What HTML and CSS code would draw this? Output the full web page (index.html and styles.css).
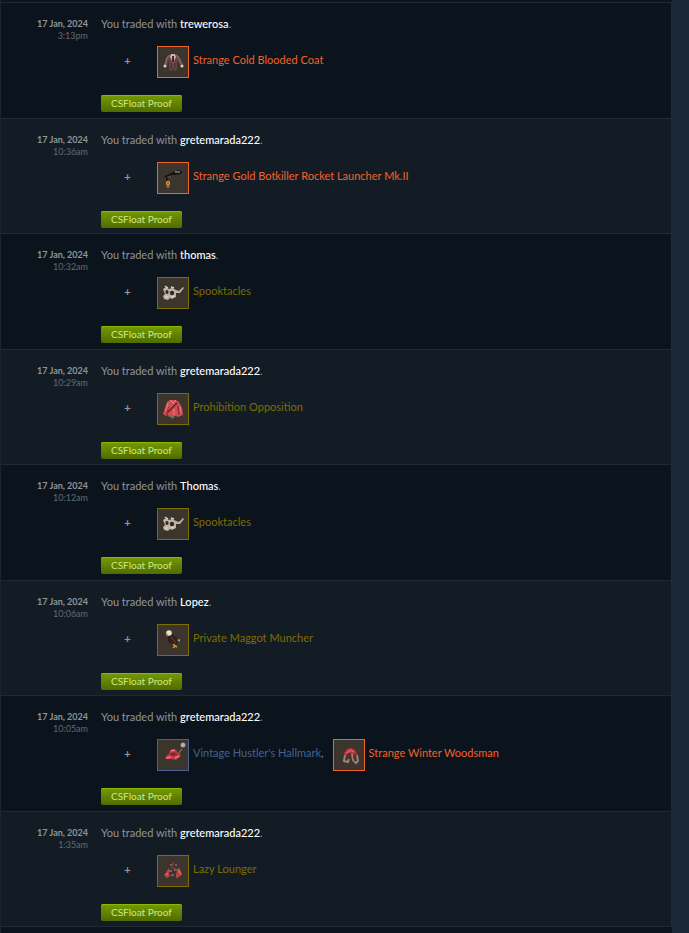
FILE: index.html
```
<!DOCTYPE html>
<html lang="en">
<head>
  <meta charset="UTF-8">
  <title>Trade History</title>
  <link rel="stylesheet" href="styles.css">
</head>
<body>
  <!-- item pictures -->
  <svg class="sprites" width="0" height="0" aria-hidden="true">
    <symbol id="coat" viewBox="0 0 30 30">
      <path d="M12 8 8 11 6 19 8 20 11 13 11 23 14 24 15 21 17 24 19 22 19 13 23 20 25 18 21 10 17 8z" fill="#654644"/>
      <path d="M12 8 9 11 7 18M18 8 21 11 24 18" fill="none" stroke="#7d6a65" stroke-width="1.5"/>
      <path d="M13 7h4l1 3-3 6-3-6z" fill="#c4b6a8"/>
      <path d="M15 9v6" stroke="#5c1f26" stroke-width="2"/>
      <path d="M13 16v6M17 16v5" stroke="#422d30" stroke-width="1"/>
      <circle cx="7" cy="19" r="1.5" fill="#dbcfbd"/>
      <circle cx="24" cy="19" r="1.5" fill="#dbcfbd"/>
    </symbol>
    <symbol id="launcher" viewBox="0 0 30 30">
      <path d="M7 14 16 10" stroke="#171310" stroke-width="2"/>
      <path d="M14 10 21 7 24 9 23 11 15 12z" fill="#11100f"/>
      <path d="M17 9 22 9" stroke="#8b7e73" stroke-width="1.5"/>
      <path d="M9 14 12 13 12 16" stroke="#5b4430" fill="none"/>
      <path d="M9 14v5" stroke="#211710" stroke-width="1.5"/>
      <circle cx="10" cy="20" r="2.2" fill="#d39a3a"/>
      <path d="M8 22h4l-1 3H9z" fill="#b4602a"/>
      <path d="M9 20h2" stroke="#5d3513"/>
    </symbol>
    <symbol id="glasses" viewBox="0 0 30 30">
      <path d="M5 11 8 9 11 11 14 10 18 12 21 13 25 9 26 10 22 15 18 15 18 19 14 21 12 20 10 22 6 21 5 18 7 16z" fill="#c1b3a1"/>
      <path d="M7 8 10 10M13 9l3 1" stroke="#e1d2bd" stroke-width="1.5"/>
      <ellipse cx="9" cy="14" rx="1.6" ry="2" fill="#342c29"/>
      <ellipse cx="14" cy="15" rx="2.2" ry="2.3" fill="#302927"/>
      <path d="M7 19h3M13 19l3-1" stroke="#efe0cb"/>
    </symbol>
    <symbol id="jacket" viewBox="0 0 30 30">
      <path d="M12 6 9 8 7 14 5 20 8 22 10 21 11 23 18 22 20 23 25 21 24 14 21 8 18 6z" fill="#cf4c52"/>
      <path d="M10 13 9 21M20 12 21 21" stroke="#922f39" stroke-width="1.5"/>
      <path d="M10 9 8 17M16 15v6M22 12l1 7" stroke="#ea6b70" stroke-width="1.5"/>
      <path d="M19 9 10 18" stroke="#56242a" stroke-width="1.5"/>
      <path d="m12 6 3 3 3-3" fill="none" stroke="#ef8585"/>
      <path d="M12 22 15 21 17 23 14 25z" fill="#6f6c68"/>
    </symbol>
    <symbol id="eagle" viewBox="0 0 30 30">
      <path d="M10 11 14 9 18 12 20 16 19 19 15 20 10 17z" fill="#30201d"/>
      <path d="M13 12 18 18" stroke="#5a3429" stroke-width="1.5"/>
      <circle cx="11" cy="8" r="2.8" fill="#eadfd0"/>
      <path d="M8 8 10 9 9 12z" fill="#d39b31"/>
      <path d="M19 15 22 14 22 17z" fill="#a9a097"/>
      <path d="M15 19 17 21 15 23M17 21 19 22" stroke="#d49c25" stroke-width="1.5" fill="none"/>
    </symbol>
    <symbol id="hat" viewBox="0 0 30 30">
      <path d="M7 19 9 15 11 14 12 10 16 9 19 11 20 14 23 14 22 17 18 20 13 19z" fill="#c03a42"/>
      <path d="M11 14 16 12 20 15 14 16z" fill="#83262e"/>
      <path d="M8 18 13 17M17 18 21 16M13 11 17 10" stroke="#ec777b" stroke-width="1.5"/>
      <path d="M20 14 24 9" stroke="#9d8574" stroke-width="1"/>
      <circle cx="25" cy="5" r="2.5" fill="#a39b93"/>
      <path d="M25 3v4M23 5h4" stroke="#c0b8b0"/>
    </symbol>
    <symbol id="woodsman" viewBox="0 0 30 30">
      <path d="M10 13 13 9 18 8 22 11 23 15 18 14 14 13 11 17z" fill="#b92f3e"/>
      <path d="M12 14 16 10 20 12" fill="none" stroke="#dc5b68" stroke-width="1.5"/>
      <path d="M11 15 10 21 14 22 15 19M18 14 19 20 22 23 24 21 23 15" fill="none" stroke="#998478" stroke-width="2"/>
      <path d="M14 15v4M20 15l1 6" stroke="#702833" stroke-width="2"/>
    </symbol>
    <symbol id="lounger" viewBox="0 0 30 30">
      <path d="M12 10 9 15 6 19 9 22 12 20 19 22 24 19 22 13 18 10z" fill="#b94345"/>
      <path d="M11 7 14 5 18 7 20 13 18 18 18 23 16 24 13 23 11 18z" fill="#3c3231"/>
      <path d="M12 9h2M17 9h2M11 15h3M16 14h3M13 19h3" stroke="#81786d" stroke-width="1.5"/>
      <path d="M15 6v4M13 12h4" stroke="#a32f38" stroke-width="1.5"/>
      <path d="M20 14 23 18M10 17l-2 2" stroke="#dc6663" stroke-width="1.5"/>
    </symbol>
  </svg>

  <main class="history">
    <article class="trade">
      <div class="date">17 Jan, 2024<span class="time">3:13pm</span></div>
      <div class="content">
        <div class="event">You traded with <a href="#">trewerosa</a>.</div>
        <div class="items">
          <span class="plus">+</span>
          <a class="item strange" href="#"><svg class="icon"><use href="#coat"/></svg><span class="name">Strange Cold Blooded Coat</span></a>
        </div>
        <button class="proof" type="button">CSFloat Proof</button>
      </div>
    </article>

    <article class="trade">
      <div class="date">17 Jan, 2024<span class="time">10:36am</span></div>
      <div class="content">
        <div class="event">You traded with <a href="#">gretemarada222</a>.</div>
        <div class="items">
          <span class="plus">+</span>
          <a class="item strange" href="#"><svg class="icon"><use href="#launcher"/></svg><span class="name">Strange Gold Botkiller Rocket Launcher Mk.II</span></a>
        </div>
        <button class="proof" type="button">CSFloat Proof</button>
      </div>
    </article>

    <article class="trade">
      <div class="date">17 Jan, 2024<span class="time">10:32am</span></div>
      <div class="content">
        <div class="event">You traded with <a href="#">thomas</a>.</div>
        <div class="items">
          <span class="plus">+</span>
          <a class="item unique" href="#"><svg class="icon"><use href="#glasses"/></svg><span class="name">Spooktacles</span></a>
        </div>
        <button class="proof" type="button">CSFloat Proof</button>
      </div>
    </article>

    <article class="trade">
      <div class="date">17 Jan, 2024<span class="time">10:29am</span></div>
      <div class="content">
        <div class="event">You traded with <a href="#">gretemarada222</a>.</div>
        <div class="items">
          <span class="plus">+</span>
          <a class="item unique" href="#"><svg class="icon"><use href="#jacket"/></svg><span class="name">Prohibition Opposition</span></a>
        </div>
        <button class="proof" type="button">CSFloat Proof</button>
      </div>
    </article>

    <article class="trade">
      <div class="date">17 Jan, 2024<span class="time">10:12am</span></div>
      <div class="content">
        <div class="event">You traded with <a href="#">Thomas</a>.</div>
        <div class="items">
          <span class="plus">+</span>
          <a class="item unique" href="#"><svg class="icon"><use href="#glasses"/></svg><span class="name">Spooktacles</span></a>
        </div>
        <button class="proof" type="button">CSFloat Proof</button>
      </div>
    </article>

    <article class="trade">
      <div class="date">17 Jan, 2024<span class="time">10:06am</span></div>
      <div class="content">
        <div class="event">You traded with <a href="#">Lopez</a>.</div>
        <div class="items">
          <span class="plus">+</span>
          <a class="item unique" href="#"><svg class="icon"><use href="#eagle"/></svg><span class="name">Private Maggot Muncher</span></a>
        </div>
        <button class="proof" type="button">CSFloat Proof</button>
      </div>
    </article>

    <article class="trade">
      <div class="date">17 Jan, 2024<span class="time">10:05am</span></div>
      <div class="content">
        <div class="event">You traded with <a href="#">gretemarada222</a>.</div>
        <div class="items">
          <span class="plus">+</span>
          <a class="item vintage" href="#"><svg class="icon"><use href="#hat"/></svg><span class="name">Vintage Hustler's Hallmark</span></a><span class="comma">,</span>
          <a class="item strange" href="#"><svg class="icon"><use href="#woodsman"/></svg><span class="name">Strange Winter Woodsman</span></a>
        </div>
        <button class="proof" type="button">CSFloat Proof</button>
      </div>
    </article>

    <article class="trade">
      <div class="date">17 Jan, 2024<span class="time">1:35am</span></div>
      <div class="content">
        <div class="event">You traded with <a href="#">gretemarada222</a>.</div>
        <div class="items">
          <span class="plus">+</span>
          <a class="item unique" href="#"><svg class="icon"><use href="#lounger"/></svg><span class="name">Lazy Lounger</span></a>
        </div>
        <button class="proof" type="button">CSFloat Proof</button>
      </div>
    </article>
  </main>
</body>
</html>
```
FILE: styles.css
```
* {
  box-sizing: border-box;
}
body {
  font-family: Lato, "Liberation Sans", sans-serif;
  font-size: 11px;
  line-height: 16px;
  color: #909498;
  background: #1b2838;
  margin: 0;
  padding: 0 17px 0 0;
}
a {
  color: inherit;
  text-decoration: none;
}
.sprites {
  display: block;
}
.history {
  min-height: 100vh;
  padding-top: 2px;
  background: #0b131c;
  border-left: 1px solid #1b2532;
}
.trade {
  display: flex;
  gap: 13px;
  padding: 13px 0 6px;
  border: 1px solid #1f2a34;
  border-width: 1px 1px 0 0;
  background: #0b131c;
}
.trade:nth-child(even) {
  padding-bottom: 5px;
  background: #131c25;
}
.trade:last-child {
  border-bottom-width: 1px;
}
.date {
  width: 87px;
  padding-top: 2px;
  font-size: 9px;
  font-weight: bold;
  line-height: 12px;
  text-align: right;
}
.time {
  display: block;
  font-weight: normal;
  color: #626970;
}
.content {
  flex: 1;
}
.event a {
  color: #fff;
  font-weight: 500;
}
.items {
  display: flex;
  padding: 14px 0 17px 23px;
}
.plus {
  width: 33px;
  font-size: 12px;
  line-height: 30px;
  font-weight: bold;
}
.item {
  display: flex;
  gap: 4px;
}
.name, .comma {
  line-height: 28px;
}
.comma {
  margin-right: 9px;
}
.icon {
  width: 32px;
  height: 32px;
  border: 1px solid;
  background: #3c352e;
}
.strange {
  color: #f2622a;
}
.unique {
  color: #7d6d00;
}
.vintage {
  color: #476291;
}
.proof {
  display: block;
  height: 17px;
  padding: 0 10px;
  border: 0;
  border-radius: 2px;
  background: linear-gradient(#749b00, #4e6c00);
  box-shadow: inset 0 1px #8bb900;
  color: #d2e885;
  font-family: inherit;
  font-size: 10px;
  line-height: 17px;
  cursor: pointer;
}
```
